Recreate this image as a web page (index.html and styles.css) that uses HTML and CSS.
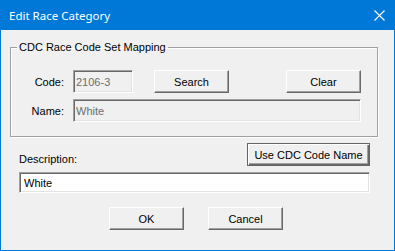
FILE: index.html
```html
<!DOCTYPE html>
<html>

<head>
    <title>Edit Race Category</title>
    <link rel="stylesheet" href="styles.css">
</head>

<body>
    <div class="window">
        <div class="titlebar">
            <span class="title">Edit Race Category</span>
            <svg class="close" width="11" height="11" viewBox="0 0 11 11">
                <path d="M0.5 0.5 L10.5 10.5 M10.5 0.5 L0.5 10.5" stroke="#fff" stroke-width="1.1" fill="none"/>
            </svg>
        </div>

        <div class="content">
            <fieldset class="group">
                <legend>CDC Race Code Set Mapping</legend>
                <div class="row row-code">
                    <label class="field-label">Code:</label>
                    <input class="textbox code" type="text" value="2106-3" disabled>
                    <button class="btn search">Search</button>
                    <button class="btn clear">Clear</button>
                </div>
                <div class="row row-name">
                    <label class="field-label">Name:</label>
                    <input class="textbox name" type="text" value="White" disabled>
                </div>
            </fieldset>

            <div class="desc-head">
                <label class="desc-label">Description:</label>
                <button class="btn default use-cdc">Use CDC Code Name</button>
            </div>
            <input class="textbox desc" type="text" value="White">

            <div class="actions">
                <button class="btn">OK</button>
                <button class="btn">Cancel</button>
            </div>
        </div>
    </div>
</body>

</html>
```

FILE: styles.css
```css
* {
    box-sizing: border-box;
}

body {
    margin: 0;
    font-family: "Liberation Sans", Arial, sans-serif;
    font-size: 11px;
    color: #000;
    background-color: #f0f0f0;
}

.window {
    width: 395px;
    height: 251px;
    border: 1px solid #0078d7;
    border-top: none;
    background-color: #f0f0f0;
}

.titlebar {
    height: 30px;
    background-color: #0078d7;
    display: flex;
    align-items: center;
    justify-content: space-between;
    padding: 0 9px 0 8px;
}

.title {
    font-family: "Noto Sans", "Open Sans", sans-serif;
    font-size: 11.5px;
    color: #fff;
}

.close {
    display: block;
}

.content {
    padding: 10px 0 0 9px;
}

/* group box */
.group {
    width: 368px;
    margin: 0;
    padding: 0 0 14px 0;
    border: 1px solid #a0a0a0;
    box-shadow: inset 1px 1px #fff, 1px 1px #fff;
}

.group legend {
    margin-left: 6px;
    padding: 0 2px;
    line-height: 14px;
}

.row {
    display: flex;
    align-items: center;
}

.row-code {
    margin-top: 16px;
}

.row-name {
    margin-top: 6px;
}

.field-label {
    width: 53px;
    text-align: right;
    margin-right: 9px;
}

/* sunken text boxes */
.textbox {
    height: 23px;
    padding: 0 2px;
    font-family: "Liberation Sans", Arial, sans-serif;
    font-size: 11px;
    color: #000;
    background-color: #fff;
    border: 1px solid;
    border-color: #a0a0a0 #fff #fff #a0a0a0;
    box-shadow: inset 1px 1px #696969, inset -1px -1px #e3e3e3;
    outline: none;
}

.textbox:disabled {
    background-color: #f0f0f0;
    color: #6d6d6d;
}

.code {
    width: 60px;
}

.name {
    width: 288px;
}

/* raised buttons */
.btn {
    width: 75px;
    height: 23px;
    padding: 0;
    font-family: "Liberation Sans", Arial, sans-serif;
    font-size: 11px;
    color: #000;
    background-color: #f0f0f0;
    border: 1px solid;
    border-color: #fff #696969 #696969 #fff;
    box-shadow: inset -1px -1px #a0a0a0;
}

.search {
    margin-left: 21px;
}

.clear {
    margin-left: 57px;
}

.btn.default {
    border-color: #646464;
    box-shadow: inset 1px 1px #fff, inset -1px -1px #696969, inset -2px -2px #a0a0a0;
}

.desc-head {
    display: flex;
    align-items: flex-end;
    justify-content: space-between;
    margin: 6px 24px 0 9px;
}

.desc-label {
    padding-bottom: 1px;
}

.use-cdc {
    width: 123px;
}

.desc {
    display: block;
    width: 351px;
    height: 21px;
    margin: 6px 0 0 9px;
    padding: 0 4px;
}

.actions {
    display: flex;
    gap: 24px;
    margin: 14px 0 0 99px;
}
```
